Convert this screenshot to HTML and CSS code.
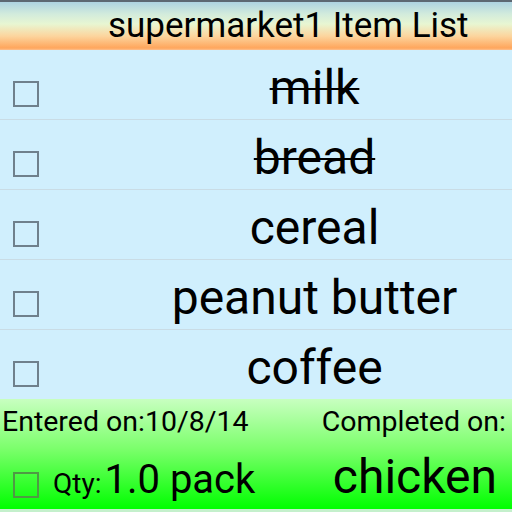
FILE: index.html
```html
<!DOCTYPE html>
<html>
<head>
<meta charset="utf-8">
<link rel="stylesheet" href="styles.css">
</head>
<body>
<div class="screen">
  <header class="title-bar">
    <span class="title">supermarket1 Item List</span>
  </header>
  <ul class="list">
    <li class="row"><span class="check"></span><span class="item done">milk</span></li>
    <li class="row"><span class="check"></span><span class="item done">bread</span></li>
    <li class="row"><span class="check"></span><span class="item">cereal</span></li>
    <li class="row"><span class="check"></span><span class="item">peanut butter</span></li>
    <li class="row"><span class="check"></span><span class="item">coffee</span></li>
  </ul>
  <footer class="detail">
    <div class="dates">
      <span>Entered on:10/8/14</span>
      <span>Completed on:</span>
    </div>
    <div class="info">
      <span class="check check-green"></span>
      <span class="qty-label">Qty:</span>
      <span class="qty">1.0 pack</span>
      <span class="name">chicken</span>
    </div>
  </footer>
  <div class="strip"></div>
</div>
</body>
</html>
```
FILE: styles.css
```css
* { box-sizing: border-box; }
html, body { margin: 0; padding: 0; }
body {
  width: 512px;
  height: 512px;
  overflow: hidden;
  font-family: Roboto, "Liberation Sans", sans-serif;
  color: #000;
  background: #d0effd;
}
.screen {
  display: flex;
  flex-direction: column;
  width: 512px;
  height: 512px;
}
.title-bar {
  height: 50px;
  flex: none;
  border-top: 2px solid #5d6873;
  background: linear-gradient(to bottom, #aed3e2 0px, #d2ebdc 12px, #e8f6d2 22px, #fcd59e 34px, #ffa65c 46px, #fbbf8e 48px);
  padding-left: 108px;
}
.title {
  display: block;
  font-size: 35px;
  line-height: 41px;
  padding-top: 3px;
  white-space: nowrap;
}
.list {
  list-style: none;
  margin: 0;
  padding: 0;
  flex: none;
}
.row {
  display: grid;
  grid-template-columns: 117px 1fr;
  height: 70px;
  border-bottom: 1px solid #c9dce5;
}
.row:last-child {
  height: 69px;
  border-bottom: none;
}
.check {
  display: block;
  width: 26px;
  height: 26px;
  border: 2px solid #6f808c;
  margin-left: 13px;
  margin-top: 31px;
}
.item {
  font-size: 48px;
  line-height: 56px;
  padding-top: 10px;
  text-align: center;
  white-space: nowrap;
}
.done {
  text-decoration: line-through;
  text-decoration-thickness: 2px;
}
.detail {
  flex: none;
  height: 110px;
  background: linear-gradient(to bottom, #c8ffc0 0%, #7cff6c 45%, #00ff00 100%);
  padding-top: 6px;
}
.dates {
  display: flex;
  justify-content: space-between;
  font-size: 28.5px;
  line-height: 34px;
  padding: 0 6px 0 2px;
  white-space: nowrap;
}
.info {
  display: flex;
  align-items: baseline;
  margin-top: 10px;
  padding-right: 15px;
  white-space: nowrap;
}
.check-green {
  align-self: flex-start;
  border-color: #4f9a45;
  margin-top: 23px;
  margin-right: 14px;
}
.qty-label {
  font-size: 28px;
  margin-right: 3px;
}
.qty {
  font-size: 40px;
}
.name {
  font-size: 48px;
  line-height: 56px;
  margin-left: auto;
}
.strip {
  flex: 1;
  background: #c4f0cc;
}
```
